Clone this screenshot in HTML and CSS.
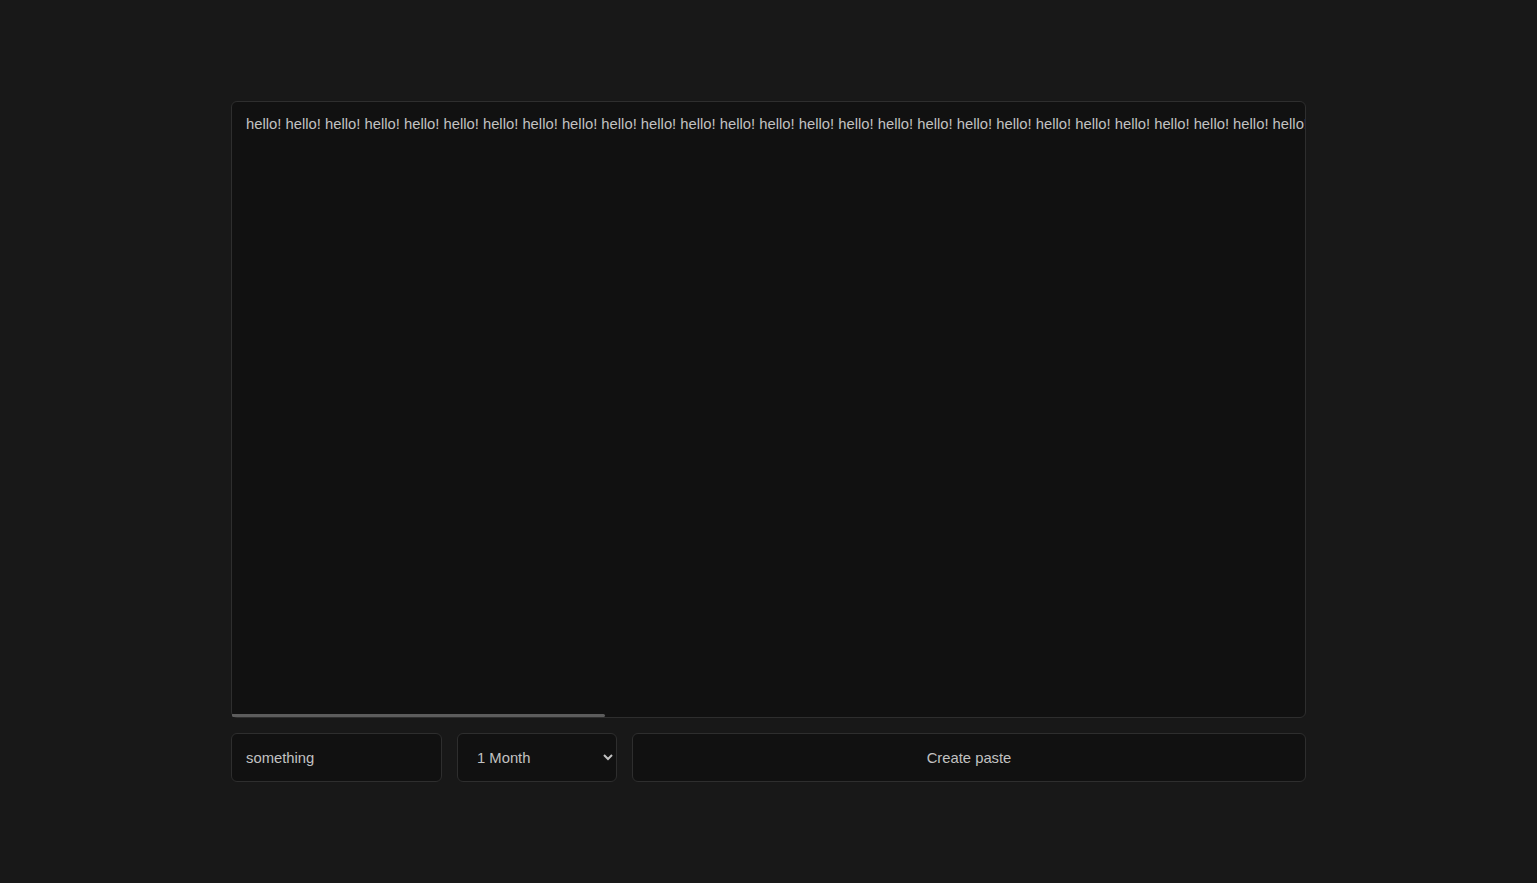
FILE: index.html
```html
<!DOCTYPE html>
<html lang="en">

<head>
  <meta charset="UTF-8" />
  <meta name="viewport" content="width=device-width, initial-scale=1.0"/>
  <title>Paste</title>
  <link rel="stylesheet" href="styles.css">
</head>

<body>
  <form class="paste-form" onsubmit="return false">
    <div class="paste-editor">
      <textarea class="paste-content" wrap="off" spellcheck="false">hello! hello! hello! hello! hello! hello! hello! hello! hello! hello! hello! hello! hello! hello! hello! hello! hello! hello! hello! hello! hello! hello! hello! hello! hello! hello! hello! hello! hello! hello! hello! hello! hello! hello! hello! hello! hello! hello! hello! hello! hello! hello! hello! hello! hello! hello! hello! hello! hello! hello! hello! hello! hello! hello! hello! hello! hello! hello! hello! hello! hello! hello! hello! hello! hello! hello! hello! hello! hello! hello! hello! hello! hello! hello! hello! hello! hello! hello!</textarea>
      <!-- fake horizontal scrollbar, the real one is hidden in headless -->
      <div class="scroll-thumb"></div>
    </div>

    <div class="paste-options">
      <input class="paste-title" type="text" value="something">
      <select class="paste-expiry">
        <option>1 Hour</option>
        <option>1 Day</option>
        <option>1 Week</option>
        <option selected>1 Month</option>
        <option>Never</option>
      </select>
      <button class="paste-submit" type="submit">Create paste</button>
    </div>
  </form>
</body>
</html>
```

FILE: styles.css
```css
body {
  font-family: "Liberation Sans", Arial, sans-serif;
  margin: 0;
  padding: 0;
  background-color: #181818;
  color: #bdbdbd;
}

.paste-form {
  width: 1075px;
  margin: 101px auto 0;
  display: flex;
  flex-direction: column;
  gap: 15px;
}

.paste-content,
.paste-title,
.paste-expiry,
.paste-submit {
  box-sizing: border-box;
  background-color: #111111;
  color: #c2c2c2;
  border: 1px solid #2e2e2e;
  border-radius: 6px;
  font-family: inherit;
  font-size: 14.8px;
  outline: none;
}

.paste-editor {
  position: relative;
  height: 617px;
}

.paste-content {
  display: block;
  width: 100%;
  height: 100%;
  padding: 14px;
  resize: none;
  white-space: pre;
  overflow: hidden;
}

.scroll-thumb {
  position: absolute;
  left: 1px;
  bottom: 1px;
  width: 373px;
  height: 3px;
  background-color: #5c5c5c;
  border-radius: 0 2px 2px 2px;
}

.paste-options {
  display: flex;
  gap: 15px;
  height: 49px;
}

.paste-title {
  width: 211px;
  padding: 0 14px;
}

.paste-expiry {
  width: 160px;
  padding: 0 15px;
}

.paste-submit {
  flex: 1;
  cursor: pointer;
}
```
